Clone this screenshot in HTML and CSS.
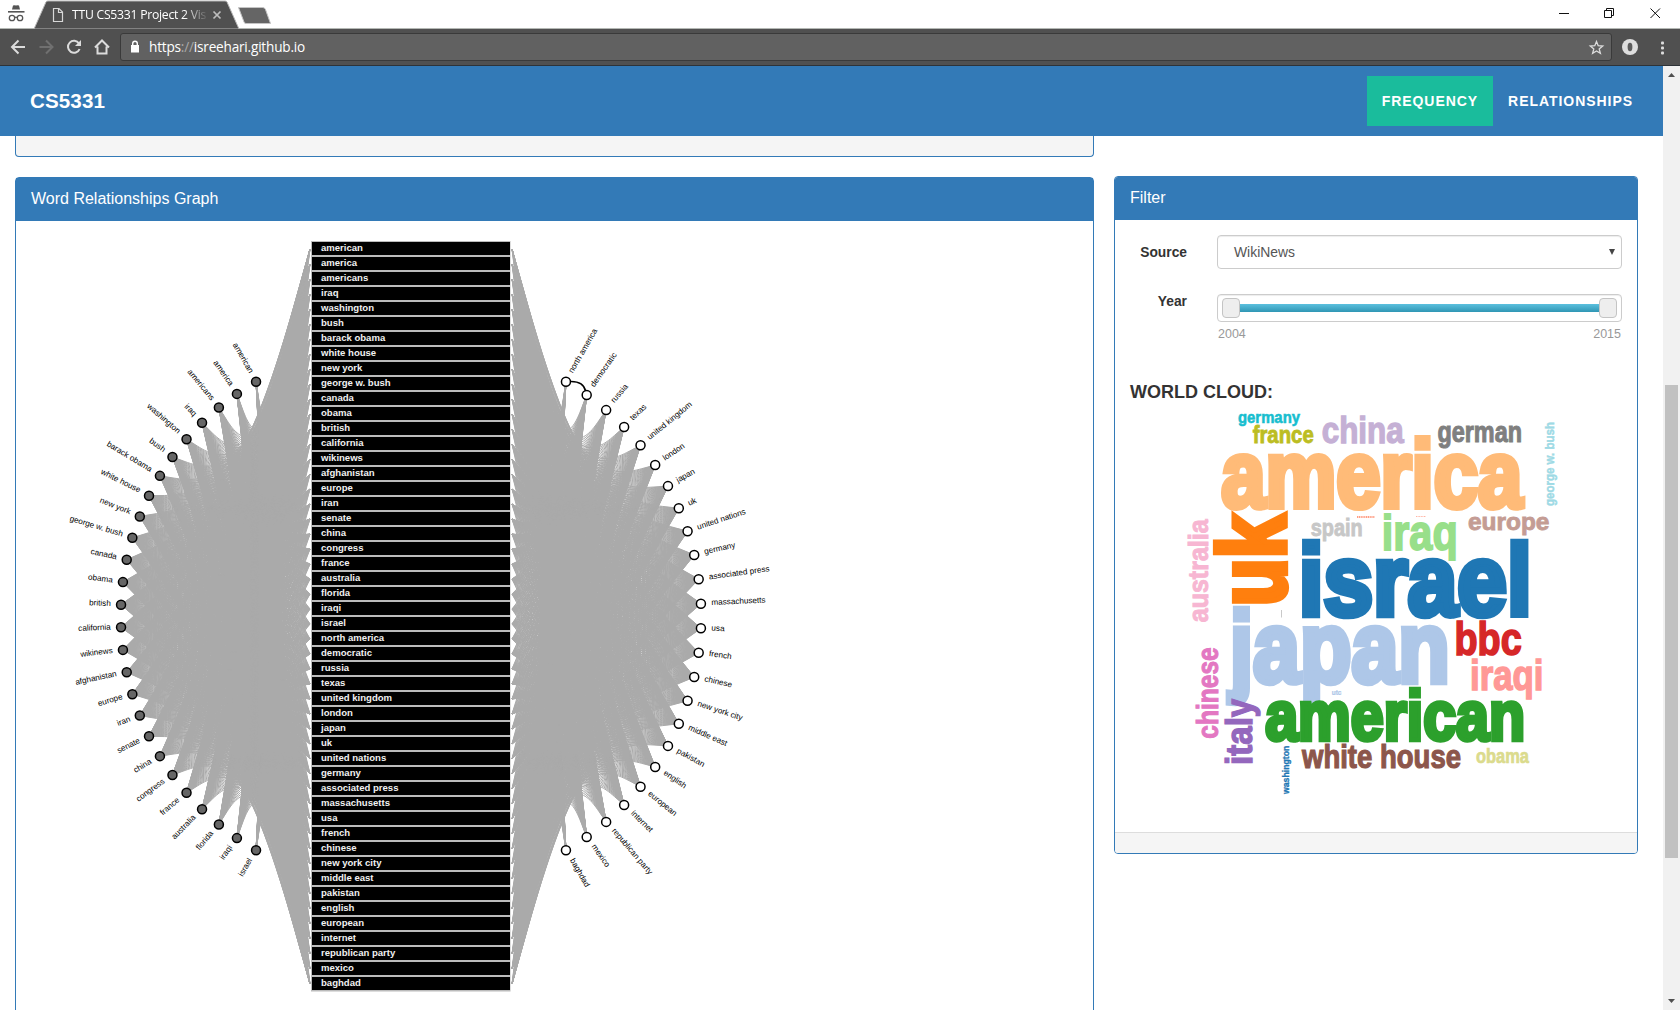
FILE: index.html
```html
<!DOCTYPE html>
<html lang="en">
<head>
<meta charset="utf-8">
<title>TTU CS5331 Project 2 Visualization</title>
<link rel="stylesheet" href="styles.css">
</head>
<body>
<div class="browser">
  <header class="chrome">
    <div class="titlebar">
      <svg class="titlebar-art" width="290" height="29" viewBox="0 0 290 29">
        <path d="M34 29 L46 2 Q46.500 1 48 1 H225 Q226.500 1 227 2 L239 29Z" fill="#505050" stroke="#b4b4b4"/>
        <path d="M238.500 7.500 H263 Q265 8 265.500 9.500 L270.500 23.500 H246 Q244.500 23.500 244 22Z" fill="#656565" stroke="#c4c4c4"/>
        <g fill="#555"><path d="M12 9.500 L13 5.500 Q14.500 4.800 16 5.500 Q17.500 4.800 19 5.500 L20 9.500Z"/><rect x="8" y="11" width="16.500" height="1.600"/></g>
        <g fill="none" stroke="#555" stroke-width="1.300"><circle cx="12" cy="18" r="2.700"/><circle cx="20" cy="18" r="2.700"/><path d="M14.500 17.600 Q16 16.600 17.500 17.600"/></g>
        <path d="M53.500 8.500 H59 L62.500 12 V21.500 H53.500Z M58.500 8.500 V12.500 H62.500" fill="none" stroke="#d8d8d8" stroke-width="1.200"/>
        <path d="M213.500 11.500 L220.500 18.500 M220.500 11.500 L213.500 18.500" stroke="#bdbdbd" stroke-width="1.700"/>
      </svg>
      <span class="tab-title">TTU CS5331 Project 2 Vis</span>
      <svg class="window-buttons" width="120" height="28" viewBox="0 0 120 28" fill="none" stroke="#111" stroke-width="1">
        <path d="M9 13.500 H19"/><path d="M54.500 10.500 H61.500 V17.500 H54.500Z M56.500 10.500 V8.500 H63.500 V15.500 H61.500"/><path d="M100.500 8.500 L110 18 M110 8.500 L100.500 18"/>
      </svg>
    </div>
    <div class="toolbar">
      <svg width="120" height="36" viewBox="0 0 120 36" fill="none" stroke-width="2">
        <path d="M25 18 H12.500 M18.500 11.500 L12 18 L18.500 24.500" stroke="#dcdcdc"/>
        <path d="M39.500 18 H52 M46 11.500 L52.500 18 L46 24.500" stroke="#707070"/>
        <path d="M79 14.500 A6 6 0 1 0 79.600 20" stroke="#dcdcdc"/><path d="M81 11 V17 H75Z" fill="#dcdcdc"/>
        <path d="M95 18.500 L102 11.500 L109 18.500 M97.500 17.500 V24.500 H106.500 V17.500" stroke="#dcdcdc"/>
      </svg>
      <div class="address">
        <svg width="28" height="26" viewBox="0 0 28 26"><rect x="10" y="11" width="8" height="7.500" fill="#fff"/><path d="M11.700 11.500 V9.500 a2.300 2.300 0 0 1 4.600 0 V11.500" fill="none" stroke="#fff" stroke-width="1.400"/></svg>
        <span class="url">https<i>://</i>isreehari.github.io</span>
        <svg width="28" height="26" viewBox="0 0 28 26"><path d="M13.500 7.500 L15.200 11.700 L19.700 12 L16.200 14.900 L17.400 19.300 L13.500 16.900 L9.600 19.300 L10.800 14.900 L7.300 12 L11.800 11.700Z" fill="none" stroke="#ddd" stroke-width="1.300"/></svg>
      </div>
      <svg width="68" height="36" viewBox="0 0 68 36"><circle cx="18" cy="18" r="8" fill="#dedede"/><ellipse cx="18" cy="18" rx="2.400" ry="4.200" fill="#5c5c5c"/><g fill="#ddd"><rect x="49" y="12.500" width="3" height="3" rx="1"/><rect x="49" y="17.500" width="3" height="3" rx="1"/><rect x="49" y="22.500" width="3" height="3" rx="1"/></g></svg>
    </div>
  </header>

  <div class="viewport">
    <div class="page">
      <nav class="navbar">
        <span class="brand">CS5331</span>
        <div class="nav-links"><a class="nav-link active">Frequency</a><a class="nav-link">Relationships</a></div>
      </nav>
      <main class="columns">
        <div class="main-column">
          <section class="panel panel-end"></section>
          <section class="panel graph-panel">
            <h3 class="panel-title">Word Relationships Graph</h3>
            <svg id="graph" width="1077" height="789" viewBox="16 221 1077 789"></svg>
          </section>
        </div>
        <aside class="panel filter-panel">
          <h3 class="panel-title">Filter</h3>
          <div class="filter-body">
            <div class="field"><label class="field-label">Source</label><div class="select"><span>WikiNews</span><svg width="8" height="8" viewBox="0 0 8 8"><path d="M1 1 H7 L4 7Z" fill="#444"/></svg></div></div>
            <div class="field year-field"><label class="field-label">Year</label>
              <div class="range">
                <div class="slider"><span class="knob"></span><span class="track"></span><span class="knob"></span></div>
                <div class="range-labels"><span>2004</span><span>2015</span></div>
              </div>
            </div>
            <h4 class="cloud-title">WORLD CLOUD:</h4>
            <svg id="cloud" width="493" height="424" viewBox="1130 408 493 424"></svg>
          </div>
          <div class="panel-footer"></div>
        </aside>
      </main>
    </div>
    <div class="scrollbar">
      <svg width="17" height="17" viewBox="0 0 17 17"><path d="M5 11 L8.500 7 L12 11Z" fill="#505050"/></svg>
      <span class="thumb"></span>
      <svg width="17" height="17" viewBox="0 0 17 17"><path d="M5 6 L8.500 10 L12 6Z" fill="#505050"/></svg>
    </div>
  </div>
</div>
<script src="app.js"></script>
</body>
</html>
```
FILE: styles.css
```css
* { box-sizing: border-box; }
body { margin: 0; background: #fff; font-family: "Liberation Sans", Arial, sans-serif; color: #333; overflow: hidden; }
.browser { width: 1680px; height: 1010px; display: flex; flex-direction: column; overflow: hidden; }
.chrome { flex: none; font-family: "Open Sans", "Noto Sans", sans-serif; }
.titlebar { height: 29px; display: flex; background: #fff; border-bottom: 1px solid #b4b8b4; position: relative; }
.titlebar-art { flex: none; }
.tab-title { position: absolute; left: 72px; top: 5px; width: 137px; overflow: hidden; white-space: nowrap; font-size: 12.2px; line-height: 20px; letter-spacing: -0.25px; color: #fff; -webkit-mask-image: linear-gradient(90deg, #000 112px, transparent 137px); mask-image: linear-gradient(90deg, #000 112px, transparent 137px); }
.window-buttons { margin: 0 10px 0 auto; }
.toolbar { height: 37px; display: flex; align-items: center; background: #505050; border-bottom: 1px solid #2e3338; }
.toolbar > svg { flex: none; }
.address { flex: 1; height: 28px; display: flex; align-items: center; background: #616161; border: 1px solid #3a3a3a; border-radius: 3px; }
.url { flex: 1; color: #fff; font-size: 13.6px; letter-spacing: -0.2px; line-height: 26px; }
.url i { font-style: normal; color: #a8a8a8; }
.viewport { flex: 1; min-height: 0; display: flex; }
.page { width: 1663px; overflow: hidden; }
.navbar { height: 70px; background: #337ab7; display: flex; align-items: center; justify-content: space-between; padding: 0 15px 0 30px; color: #fff; font-weight: bold; }
.brand { font-size: 20.6px; letter-spacing: .1px; }
.nav-links { display: flex; }
.nav-link { height: 50px; line-height: 50px; padding: 0 15px; font-size: 14px; letter-spacing: .95px; text-transform: uppercase; }
.nav-link.active { background: #1abc9c; }
.columns { display: flex; align-items: flex-start; padding: 0 25px 0 15px; }
.main-column { width: 1079px; margin-right: 20px; }
.panel { border: 1px solid #337ab7; border-radius: 4px; background: #fff; }
.panel-end { height: 21px; border-top: 0; border-radius: 0 0 4px 4px; background: #f5f5f5; margin-bottom: 20px; }
.graph-panel { height: 900px; }
.panel-title { margin: 0; height: 43px; padding-left: 15px; line-height: 42px; font-size: 16px; font-weight: normal; color: #fff; background: #337ab7; }
#graph, #cloud { display: block; }
.filter-panel { width: 525px; margin-top: 40px; overflow: hidden; }
.filter-body { padding: 15px 15px 0; }
.field { display: flex; height: 34px; }
.field-label { width: 57px; margin-right: 30px; text-align: right; font-size: 13.8px; font-weight: bold; line-height: 36px; }
.field-label + * { width: 405px; }
.select { height: 34px; display: flex; align-items: center; justify-content: space-between; border: 1px solid #ccc; border-radius: 4px; padding: 0 5px 0 16px; font-size: 13.9px; color: #555; box-shadow: inset 0 1px 1px rgba(0,0,0,.075); }
.field.year-field { margin-top: 25px; height: 83px; }
.year-field .field-label { line-height: 16px; }
.slider { height: 28px; display: flex; align-items: center; border: 1px solid #ccc; border-radius: 4px; padding: 0 4px; box-shadow: inset 0 1px 1px rgba(0,0,0,.075); }
.knob { width: 18px; height: 20px; border: 1px solid #c4c4c4; border-radius: 4px; background: #eee; }
.track { flex: 1; height: 8px; background: linear-gradient(#5bc0de, #2f96b4); }
.range-labels { display: flex; justify-content: space-between; padding: 4px 1px 0; font-size: 12.5px; line-height: 17px; color: #999; }
.cloud-title { margin: 0; height: 31px; line-height: 31px; font-size: 18px; font-weight: bold; }
#cloud { margin-left: -1px; font-family: "Liberation Sans", Arial, sans-serif; font-weight: bold; }
.panel-footer { height: 21px; border-top: 1px solid #ddd; background: #f5f5f5; }
.scrollbar { width: 17px; background: #f1f1f1; display: flex; flex-direction: column; align-items: center; }
.thumb { width: 13px; height: 473px; margin: 302px 0 auto; background: #c1c1c1; }
.link { fill: none; stroke: #aaa; stroke-width: 1; }
.relation { fill: none; stroke: #000; stroke-width: 1.5; }
.node { stroke: #000; stroke-width: 1.5; }
.node-left { fill: #666; }
.node-right { fill: #fff; }
.node-label { font-size: 8.15px; fill: #000; }
.bar-back { fill: #bbb; }
.bar { fill: #000; }
.bar-label { font-size: 9.55px; font-weight: bold; fill: #f2f2f2; }
```
FILE: app.js
```js
const NS = 'http://www.w3.org/2000/svg';
function add(parent, tag, attrs, text) {
  const el = document.createElementNS(NS, tag);
  for (const k in attrs) el.setAttribute(k, attrs[k]);
  if (text) el.textContent = text;
  parent.appendChild(el);
  return el;
}

const words = ['american', 'america', 'americans', 'iraq', 'washington', 'bush', 'barack obama', 'white house', 'new york',
  'george w. bush', 'canada', 'obama', 'british', 'california', 'wikinews', 'afghanistan', 'europe', 'iran', 'senate', 'china',
  'congress', 'france', 'australia', 'florida', 'iraqi', 'israel', 'north america', 'democratic', 'russia', 'texas',
  'united kingdom', 'london', 'japan', 'uk', 'united nations', 'germany', 'associated press', 'massachusetts', 'usa', 'french',
  'chinese', 'new york city', 'middle east', 'pakistan', 'english', 'european', 'internet', 'republican party', 'mexico', 'baghdad'];
const SPLIT = 26, R = 270.5, CY = 616, TOP = 241.5, ROW = 15;
const graph = document.getElementById('graph');

const nodes = words.map((name, i) => {
  const left = i < SPLIT;
  const step = left ? i / (SPLIT - 1) : (i - SPLIT) / (words.length - SPLIT - 1);
  const deg = 30 + 120 * step, a = deg * Math.PI / 180;
  return { name, left, deg, x: left ? 391.3 - R * Math.sin(a) : 430.7 + R * Math.sin(a), y: CY - R * Math.cos(a) };
});

// Bundled link: uniform B-spline through node, pull point and row edge
function bundle(n, tx, ty) {
  const hub = n.left ? 255 : 567;
  const p = [n.x, n.y], q = [tx, ty];
  const c = [(hub + (n.x + tx) / 2) / 2, (CY + (n.y + ty) / 2) / 2];
  const mix = (a, b, t) => [a[0] + (b[0] - a[0]) * t, a[1] + (b[1] - a[1]) * t];
  const f = v => v[0].toFixed(2) + ' ' + v[1].toFixed(2);
  const mid = [(p[0] + 4 * c[0] + q[0]) / 6, (p[1] + 4 * c[1] + q[1]) / 6];
  return `M${f(p)}L${f(mix(p, c, 1 / 6))}C${f(mix(p, c, 1 / 3))} ${f(mix(p, c, 2 / 3))} ${f(mid)}C${f(mix(q, c, 2 / 3))} ${f(mix(q, c, 1 / 3))} ${f(mix(q, c, 1 / 6))}L${f(q)}`;
}

nodes.forEach(n => {
  const d = words.map((w, j) => bundle(n, n.left ? 310 : 512, TOP + ROW * (j + .5)));
  d.forEach(path => add(graph, 'path', { class: 'link', d: path }));
});
add(graph, 'path', { class: 'relation', d: 'M569 381.500 C578 381 584 383 585.500 391' });
nodes.forEach(n => {
  add(graph, 'circle', { class: 'node ' + (n.left ? 'node-left' : 'node-right'), cx: n.x, cy: n.y, r: 4.5 });
  const rot = n.left ? 90 - n.deg : n.deg - 90;
  add(graph, 'text', { class: 'node-label', x: n.left ? -10.3 : 10.5, y: 1.8, 'text-anchor': n.left ? 'end' : 'start',
    transform: `translate(${n.x} ${n.y}) rotate(${rot})` }, n.name);
});
add(graph, 'rect', { class: 'bar-back', x: 311, y: 241, width: 199.5, height: 750.5 });
words.forEach((w, i) => {
  add(graph, 'rect', { class: 'bar', x: 312, y: 242 + ROW * i, width: 198, height: 13 });
  add(graph, 'text', { class: 'bar-label', x: 321, y: 251 + ROW * i }, w);
});

// word, start, end, baseline, x-height, colour, rotated
const cloud = [
  ['germany', 1238.3, 1300.3, 423.5, 9.7, '#17becf'], ['france', 1253, 1314, 443.7, 14.3, '#bcbd22'],
  ['china', 1322, 1404, 443.7, 22.5, '#c5b0d5'], ['german', 1437.7, 1522.3, 443, 18, '#7f7f7f'],
  ['america', 1221.5, 1522.5, 510, 59, '#ffbb78'], ['george w. bush', 506, 422, 1555.7, 8, '#9edae5', 1],
  ['uk', 606, 515, 1289, 59, '#ff7f0e', 1], ['spain', 1311, 1363, 536, 14, '#c7c7c7'],
  ['iraq', 1382, 1458, 550.7, 30, '#98df8a'], ['europe', 1468.3, 1549.7, 530, 14.5, '#c49c94'],
  ['israel', 1299, 1532, 618, 63, '#1f77b4'], ['australia', 622.3, 519.3, 1209.5, 16.7, '#f7b6d2', 1],
  ['japan', 1230, 1450, 685, 62, '#aec7e8'], ['bbc', 1454.7, 1522, 655.7, 28, '#d62728'],
  ['iraqi', 1470.3, 1543.7, 690.7, 25, '#ff9896'], ['chinese', 738.7, 647.3, 1220, 17.3, '#e377c2', 1],
  ['italy', 765, 698.7, 1254, 22.5, '#9467bd', 1], ['american', 1265.5, 1525.5, 742.3, 43.5, '#2ca02c'],
  ['white house', 1302.3, 1461.3, 769, 20.3, '#8c564b'], ['obama', 1476.3, 1529.3, 763, 12.3, '#dbdb8d'],
  ['washington', 794, 745.7, 1290, 5.5, '#1f77b4', 1], ['utc', 1332, 1341.7, 694.7, 4, '#aec7e8']];
const cloudSvg = document.getElementById('cloud');
cloud.forEach(([w, s, e, base, xh, fill, rotated]) => {
  const weight = xh > 35 ? .105 : .06;
  const y = base - xh * weight / 2;
  const at = rotated ? `translate(${y} ${s}) rotate(-90)` : `translate(${s + .7} ${y})`;
  add(cloudSvg, 'text', { transform: at, fill, stroke: fill, 'stroke-width': xh * weight, 'stroke-miterlimit': 3,
    'font-size': xh * (xh > 35 ? 1.6 : 1.68), textLength: Math.abs(e - s), lengthAdjust: 'spacingAndGlyphs' }, w);
});
add(cloudSvg, 'path', { d: 'M1358 517 H1376', stroke: '#ff7f5e', 'stroke-width': 1.5, 'stroke-dasharray': '1.2 .6' });
add(cloudSvg, 'path', { d: 'M1417 516.500 H1427', stroke: '#ffb4a4', 'stroke-width': 1, 'stroke-dasharray': '1 .6' });
add(cloudSvg, 'path', { d: 'M1282.500 610 V617.500', stroke: '#bbb', 'stroke-width': .8 });
```
